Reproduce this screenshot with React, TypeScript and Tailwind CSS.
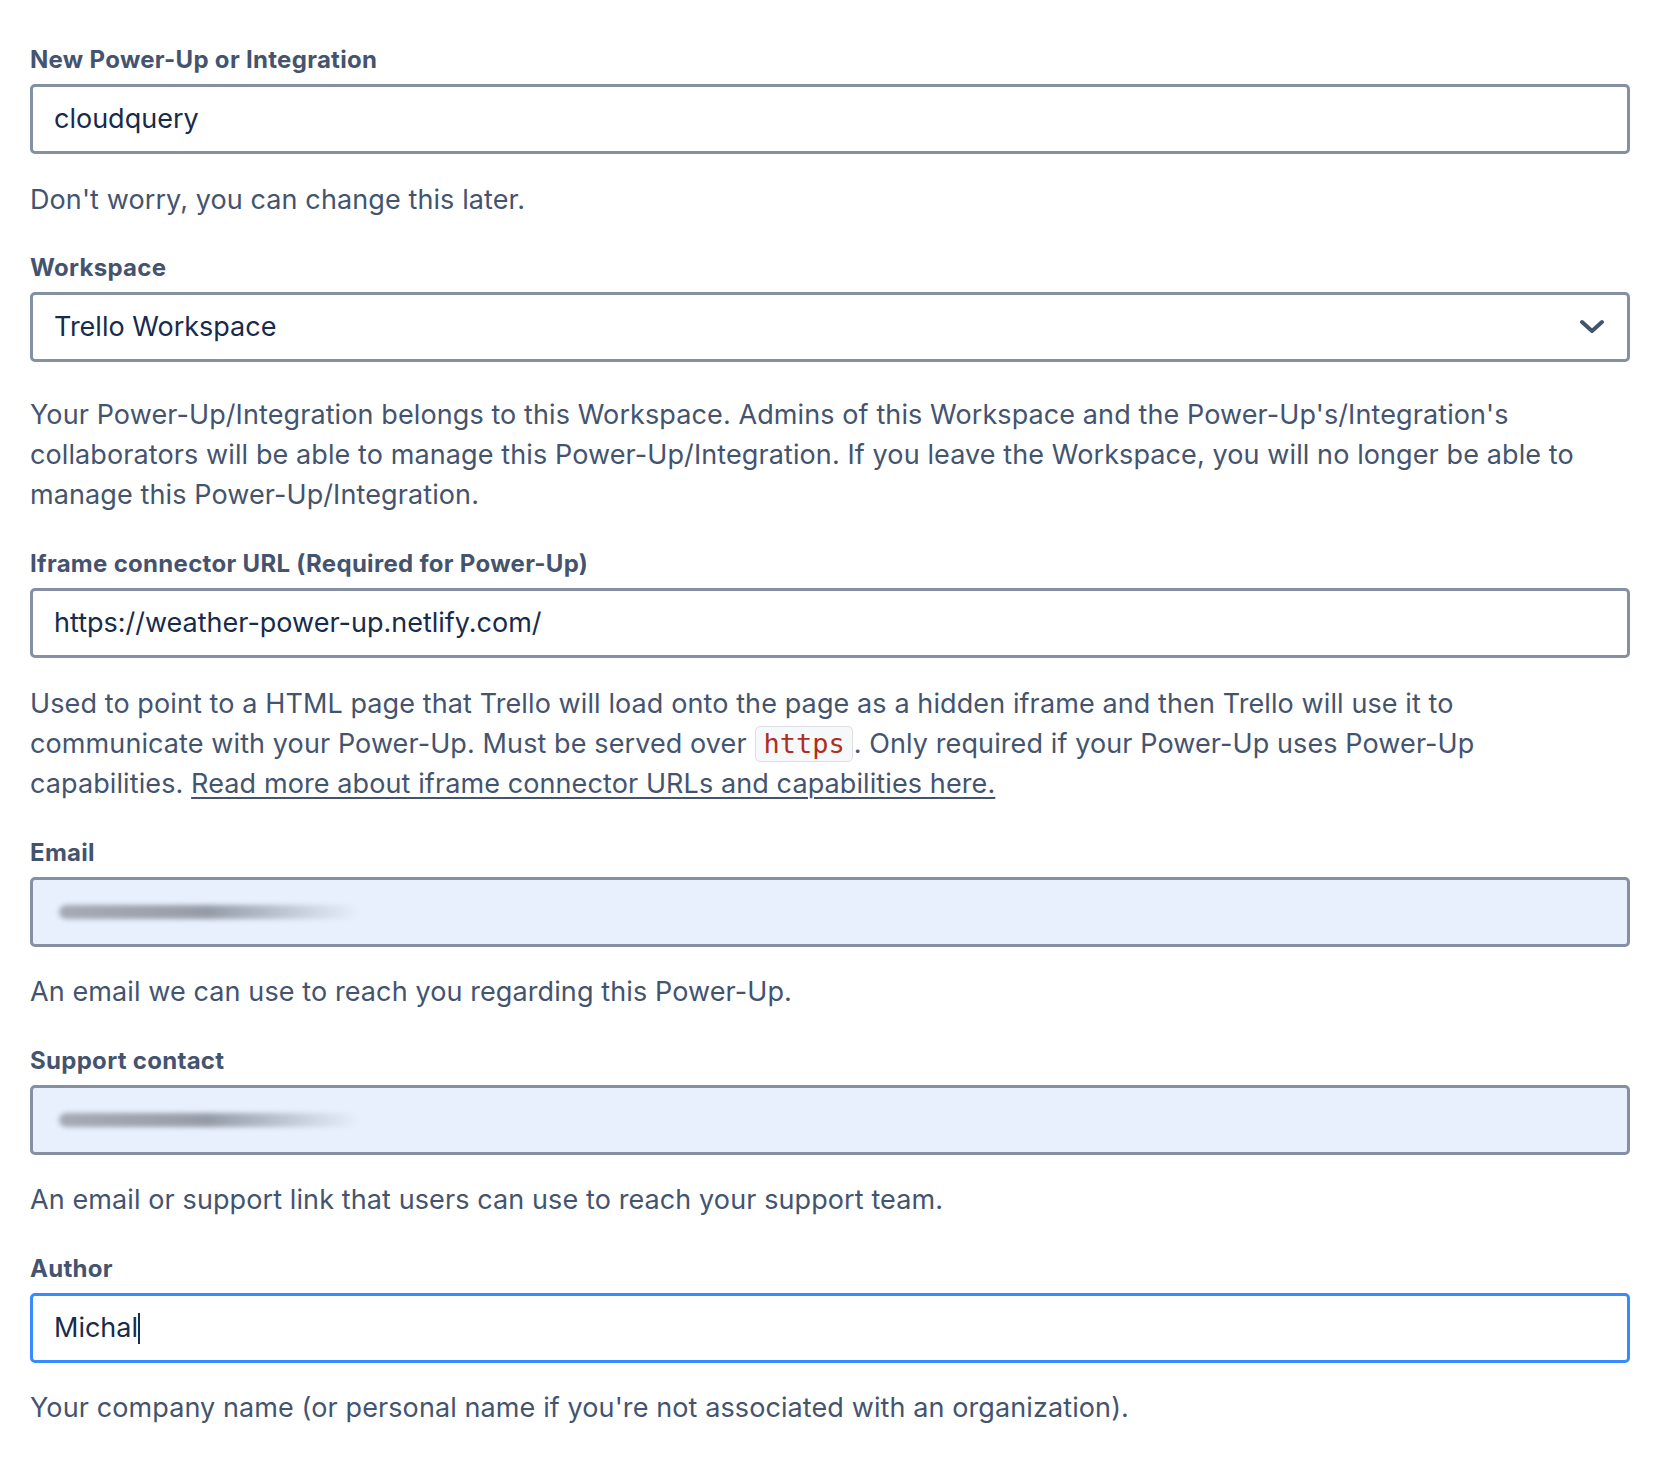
import React from "react";

const font = { fontFamily: "Inter, 'Noto Sans', sans-serif" };

function Label({ children }: { children: React.ReactNode }) {
  return (
    <div className="text-[24px] leading-[28px] font-bold tracking-[0.3px] text-[#44546F] mb-[10px]">{children}</div>
  );
}

function Help({ children, className = "" }: { children: React.ReactNode; className?: string }) {
  return <div className={"text-[27px] leading-[40px] tracking-[0.1px] text-[#44546F] " + className}>{children}</div>;
}

function Blur() {
  return (
    <div className="absolute left-[26px] top-1/2 -translate-y-1/2 h-[14px] w-[300px] rounded-full bg-gradient-to-r from-[#a5abb5] via-[#959ca8] to-transparent blur-[2.5px]" />
  );
}

export default function App() {
  return (
    <div className="bg-white min-h-[1458px] w-[1664px]" style={font}>
      <div className="ml-[30px] w-[1600px] pt-[46px]">
        {/* Field 1 */}
        <Label>New Power-Up or Integration</Label>
        <div className="h-[70px] border-[3px] border-[#8590A2] rounded-[5px] flex items-center px-[21px] text-[27px] text-[#172B4D]">
          cloudquery
        </div>
        <Help className="mt-[26px]">Don't worry, you can change this later.</Help>

        {/* Field 2 */}
        <div className="mt-[34px]">
          <Label>Workspace</Label>
          <div className="h-[70px] border-[3px] border-[#8590A2] rounded-[5px] flex items-center justify-between px-[21px] text-[27px] text-[#172B4D]">
            <span>Trello Workspace</span>
            <svg width="26" height="16" viewBox="0 0 26 16" className="mr-[1px]">
              <path d="M3 3 L13 12 L23 3" fill="none" stroke="#44546F" strokeWidth="4" strokeLinecap="round" strokeLinejoin="round" />
            </svg>
          </div>
          <Help className="mt-[33px]">
            Your Power-Up/Integration belongs to this Workspace. Admins of this Workspace and the Power-Up's/Integration's collaborators will be able to manage this Power-Up/Integration. If you leave the Workspace, you will no longer be able to manage this Power-Up/Integration.
          </Help>
        </div>

        {/* Field 3 */}
        <div className="mt-[35px]">
          <Label>Iframe connector URL (Required for Power-Up)</Label>
          <div className="h-[70px] border-[3px] border-[#8590A2] rounded-[5px] flex items-center px-[21px] text-[27px] text-[#172B4D]">
            https://weather-power-up.netlify.com/
          </div>
          <Help className="mt-[26px]">
            Used to point to a HTML page that Trello will load onto the page as a hidden iframe and then Trello will use it to communicate with your Power-Up. Must be served over{" "}
            <code
              className="inline-block leading-[34px] px-[7px] mx-[1px] rounded-[5px] border border-[#DCDFE4] bg-[#F7F8F9] text-[#AE2E24] text-[27px] tracking-normal"
              style={{ fontFamily: "'DejaVu Sans Mono', 'Liberation Mono', monospace" }}
            >
              https
            </code>
            . Only required if your Power-Up uses Power-Up capabilities.{" "}
            <a className="underline underline-offset-[4px] decoration-[1.5px]">Read more about iframe connector URLs and capabilities here.</a>
          </Help>
        </div>

        {/* Field 4 */}
        <div className="mt-[35px]">
          <Label>Email</Label>
          <div className="relative h-[70px] border-[3px] border-[#8590A2] rounded-[5px] bg-[#E8F0FE]">
            <Blur />
          </div>
          <Help className="mt-[25px]">An email we can use to reach you regarding this Power-Up.</Help>
        </div>

        {/* Field 5 */}
        <div className="mt-[35px]">
          <Label>Support contact</Label>
          <div className="relative h-[70px] border-[3px] border-[#8590A2] rounded-[5px] bg-[#E8F0FE]">
            <Blur />
          </div>
          <Help className="mt-[25px]">An email or support link that users can use to reach your support team.</Help>
        </div>

        {/* Field 6 */}
        <div className="mt-[35px]">
          <Label>Author</Label>
          <div className="h-[70px] border-[3px] border-[#388BFF] rounded-[5px] flex items-center px-[21px] text-[27px] text-[#172B4D]">
            <span>Michal</span>
            <span className="inline-block w-[2px] h-[31px] bg-[#172B4D]" />
          </div>
          <Help className="mt-[25px]">Your company name (or personal name if you're not associated with an organization).</Help>
        </div>
      </div>
    </div>
  );
}
